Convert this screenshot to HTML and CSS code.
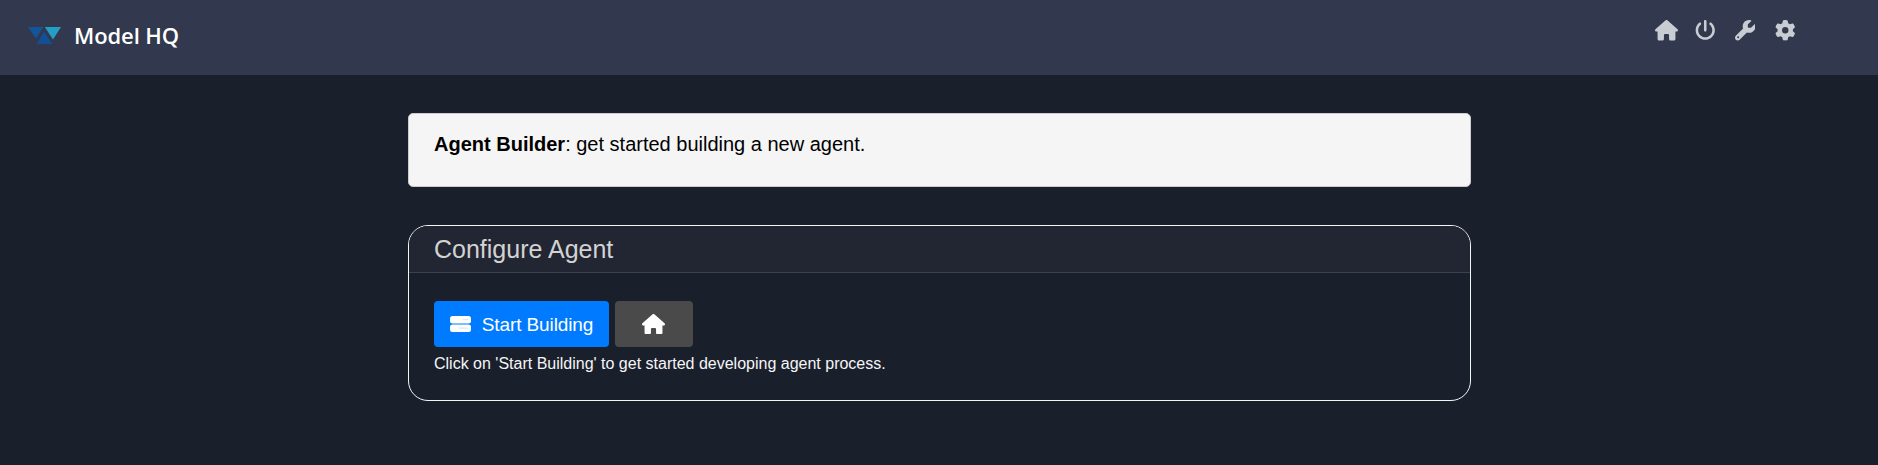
FILE: index.html
```html
<!DOCTYPE html>
<html lang="en">
<head>
<meta charset="utf-8">
<title>Model HQ</title>
<link rel="stylesheet" href="styles.css">
</head>
<body>
<header class="topbar">
  <div class="brand">
    <svg class="logo" viewBox="0 0 33 17">
      <path fill="#12559a" d="M0 0H15.500L8 11.500Z"/>
      <path fill="#239fc5" d="M16.800 0H33L25 12.500Z"/>
      <path fill="#124f94" d="M16 4.500L24.500 17H8.500Z"/>
    </svg>
    <span class="brand-name">Model HQ</span>
  </div>
  <nav class="actions">
    <svg class="icon icon-home" viewBox="0 0 576 512"><path d="M575.8 255.5c0 18-15 32.1-32 32.1h-32l.7 160.2c0 2.7-.2 5.4-.5 8.1V472c0 22.100-17.900 40-40 40H392c-22.100 0-40-17.900-40-40V384c0-17.700-14.300-32-32-32H256c-17.700 0-32 14.300-32 32v88c0 22.100-17.900 40-40 40H104c-22.100 0-40-17.900-40-40V287.600H32c-18 0-32-14-32-32.100c0-9 3-17 10-24L266.400 8c7-7 15-8 22-8s15 2 21 7L564.800 231.500c8 7 12 15 11 24z"/></svg>
    <svg class="icon" viewBox="0 0 512 512"><path d="M288 32c0-17.700-14.300-32-32-32s-32 14.300-32 32V256c0 17.700 14.300 32 32 32s32-14.300 32-32V32zM143.500 120.600c13.600-11.300 15.400-31.500 4.100-45.100s-31.500-15.400-45.100-4.100C49.700 115.400 16 181.800 16 256c0 132.500 107.500 240 240 240s240-107.500 240-240c0-74.200-33.800-140.600-86.600-184.600c-13.600-11.300-33.800-9.400-45.100 4.100s-9.400 33.800 4.100 45.100c38.900 32.300 63.500 81 63.500 135.400c0 97.200-78.800 176-176 176s-176-78.800-176-176c0-54.400 24.700-103.100 63.500-135.400z"/></svg>
    <svg class="icon" viewBox="0 0 512 512"><path d="M352 320c88.400 0 160-71.600 160-160c0-15.300-2.200-30.100-6.200-44.200c-3.100-10.800-16.400-13.200-24.300-5.300l-76.800 76.800c-3 3-7.100 4.700-11.300 4.700H336c-8.800 0-16-7.200-16-16V118.600c0-4.200 1.700-8.300 4.700-11.300l76.800-76.800c7.900-7.900 5.400-21.200-5.300-24.300C382.100 2.200 367.300 0 352 0C263.600 0 192 71.600 192 160c0 19.100 3.400 37.500 9.500 54.500L19.900 396.100C7.200 408.800 0 426.100 0 444.100C0 481.600 30.400 512 67.900 512c18 0 35.300-7.200 48-19.900L297.500 310.500c17 6.200 35.400 9.500 54.500 9.500zM80 408a24 24 0 1 1 0 48 24 24 0 1 1 0-48z"/></svg>
    <svg class="icon" viewBox="0 0 512 512"><path d="M495.900 166.600c3.200 8.700 .5 18.400-6.400 24.600l-43.300 39.400c1.100 8.300 1.700 16.800 1.700 25.400s-.6 17.100-1.700 25.400l43.300 39.400c6.900 6.200 9.600 15.900 6.400 24.600c-4.400 11.900-9.700 23.300-15.800 34.300l-4.700 8.100c-6.600 11-14 21.400-22.100 31.200c-5.900 7.200-15.700 9.600-24.500 6.800l-55.700-17.700c-13.400 10.300-28.200 18.900-44 25.400l-12.500 57.100c-2 9.100-9 16.300-18.200 17.800c-13.800 2.300-28 3.500-42.500 3.500s-28.700-1.200-42.500-3.500c-9.200-1.500-16.200-8.700-18.200-17.800l-12.500-57.100c-15.800-6.500-30.600-15.100-44-25.400L83.100 425.900c-8.800 2.800-18.600 .3-24.500-6.800c-8.100-9.800-15.500-20.200-22.100-31.200l-4.700-8.100c-6.100-11-11.400-22.400-15.800-34.300c-3.200-8.700-.5-18.400 6.400-24.600l43.300-39.400C64.600 273.100 64 264.600 64 256s.6-17.100 1.700-25.400L22.400 191.200c-6.900-6.200-9.600-15.900-6.400-24.600c4.400-11.900 9.700-23.300 15.800-34.300l4.700-8.100c6.600-11 14-21.400 22.100-31.200c5.900-7.200 15.700-9.600 24.500-6.800l55.700 17.700c13.400-10.300 28.200-18.900 44-25.400l12.500-57.100c2-9.100 9-16.300 18.200-17.800C227.300 1.200 241.500 0 256 0s28.700 1.200 42.500 3.500c9.200 1.500 16.200 8.700 18.200 17.800l12.500 57.100c15.800 6.500 30.600 15.100 44 25.400l55.700-17.700c8.800-2.800 18.600-.3 24.500 6.800c8.100 9.800 15.500 20.200 22.100 31.200l4.700 8.100c6.100 11 11.400 22.400 15.800 34.300zM256 336a80 80 0 1 0 0-160 80 80 0 1 0 0 160z"/></svg>
  </nav>
</header>
<main class="content">
  <section class="notice"><strong>Agent Builder</strong>: get started building a new agent.</section>
  <section class="card">
    <h1 class="card-title">Configure Agent</h1>
    <div class="card-body">
      <div class="buttons">
        <button class="btn btn-primary">
          <svg class="server" viewBox="0 0 21 16"><rect width="21" height="7.500" rx="2.500"/><rect y="8.500" width="21" height="7.500" rx="2.500"/><path fill="#d5e9ff" d="M13 3h5v1.300h-5zM9 11.500h9v1.300H9z"/></svg>
          <span class="btn-label">Start Building</span>
        </button>
        <button class="btn btn-home" aria-label="Home">
          <svg class="home" viewBox="0 0 576 512"><path d="M575.8 255.5c0 18-15 32.1-32 32.1h-32l.7 160.2c0 2.7-.2 5.4-.5 8.1V472c0 22.100-17.900 40-40 40H392c-22.100 0-40-17.900-40-40V384c0-17.700-14.300-32-32-32H256c-17.700 0-32 14.300-32 32v88c0 22.100-17.900 40-40 40H104c-22.100 0-40-17.900-40-40V287.600H32c-18 0-32-14-32-32.100c0-9 3-17 10-24L266.400 8c7-7 15-8 22-8s15 2 21 7L564.800 231.500c8 7 12 15 11 24z"/></svg>
        </button>
      </div>
      <p class="hint">Click on 'Start Building' to get started developing agent process.</p>
    </div>
  </section>
</main>
</body>
</html>
```
FILE: styles.css
```css
* { box-sizing: border-box; }
body {
  margin: 0;
  min-height: 465px;
  background: #1a1f2c;
  color: #fff;
  font-family: "Liberation Sans", Arial, sans-serif;
}
.topbar {
  height: 75px;
  padding: 0 83px 0 28px;
  display: flex;
  justify-content: space-between;
  background: #32384d;
}
.brand { display: flex; gap: 13px; height: 72px; align-items: center; }
.logo { width: 33px; height: 17px; margin-bottom: 2px; }
.brand-name {
  margin-bottom: 2px;
  font: 600 22px/30px "Open Sans", sans-serif;
  letter-spacing: -0.1px;
}
.actions { display: flex; gap: 19.5px; padding-top: 20px; }
.icon { width: 20.5px; height: 20.5px; fill: #c8ccd3; }
.icon-home { width: 23px; margin-right: -3px; }
.content { width: 1063px; margin: 38px auto 0 408px; }
.notice {
  height: 74px;
  padding: 18px 25px;
  border: 1px solid #ccc;
  border-radius: 5px;
  background: #f5f5f5;
  color: #000;
  font-size: 20px;
  line-height: 24px;
}
.card {
  height: 176px;
  margin-top: 38px;
  border: 1px solid #f5f5f5;
  border-radius: 20px;
  overflow: hidden;
}
.card-title {
  margin: 0;
  height: 47px;
  padding: 0 25px;
  border-bottom: 1px solid #403f4c;
  background: #222632;
  color: #d3d3d3;
  font-size: 25px;
  font-weight: 400;
  line-height: 46px;
}
.card-body { padding: 28px 25px 0; }
.buttons { display: flex; gap: 6px; }
.btn {
  height: 46px;
  padding: 0;
  border: 0;
  border-radius: 4px;
  color: #fff;
  display: flex;
  align-items: center;
  justify-content: center;
  font: 19px "Liberation Sans", Arial, sans-serif;
}
.btn-primary { width: 175px; gap: 11px; background: #007bff; }
.btn-label { padding-top: 2px; letter-spacing: -0.1px; }
.btn-home { width: 78px; padding-right: 1px; background: #4a4a4a; }
.server { width: 21px; height: 16px; fill: #fff; }
.home { width: 23px; height: 20.5px; fill: #fff; }
.hint { margin: 7px 0 0; font-size: 16px; line-height: 20px; color: #f5f5f5; }
```
